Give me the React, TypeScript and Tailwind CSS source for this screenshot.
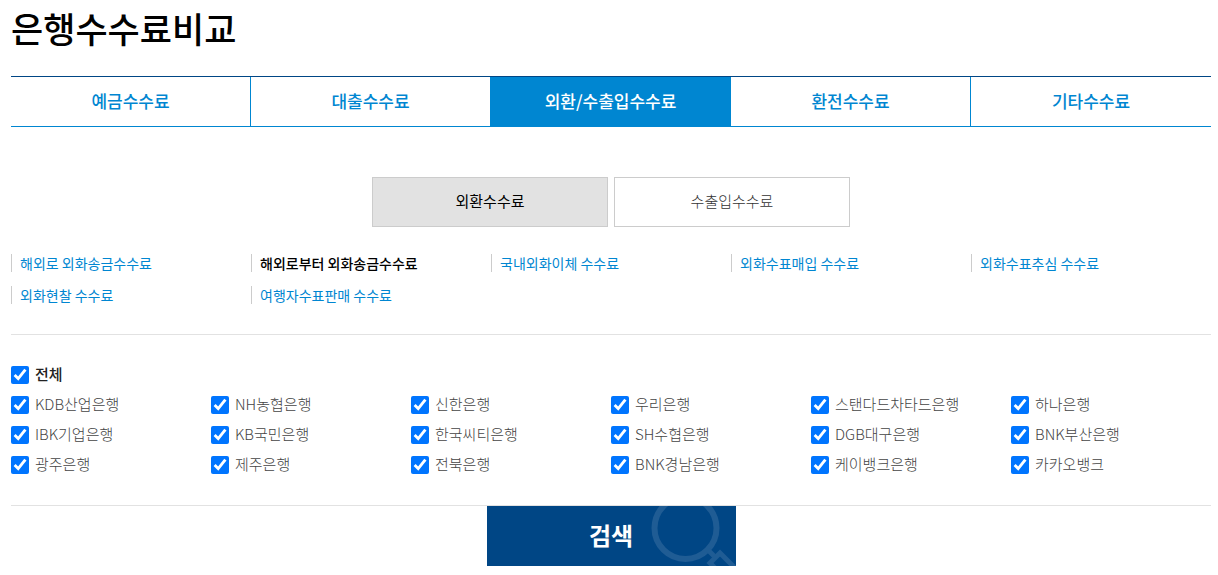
import React, { useState } from "react";
import clsx from "clsx";

const tabs = ["예금수수료", "대출수수료", "외환/수출입수수료", "환전수수료", "기타수수료"];

const subTabs = ["외환수수료", "수출입수수료"];

const feeTypes = [
    "해외로 외화송금수수료",
    "해외로부터 외화송금수수료",
    "국내외화이체 수수료",
    "외화수표매입 수수료",
    "외화수표추심 수수료",
    "외화현찰 수수료",
    "여행자수표판매 수수료",
];

const banks = [
    "KDB산업은행",
    "NH농협은행",
    "신한은행",
    "우리은행",
    "스탠다드차타드은행",
    "하나은행",
    "IBK기업은행",
    "KB국민은행",
    "한국씨티은행",
    "SH수협은행",
    "DGB대구은행",
    "BNK부산은행",
    "광주은행",
    "제주은행",
    "전북은행",
    "BNK경남은행",
    "케이뱅크은행",
    "카카오뱅크",
];

function FeeTabs() {
    return (
        <nav className="border-t border-b border-t-[#004685] border-b-[#0086d1]">
            <ul className="grid grid-cols-5 divide-x divide-[#0086d1]">
                {tabs.map((tab, i) => (
                    <li key={tab}>
                        <a
                            href="#"
                            className={clsx(
                                "flex h-[49px] items-center justify-center pb-0.5 text-[17px] font-medium",
                                i === 2 ? "bg-[#0086d1] text-white" : "text-[#0086d1]"
                            )}
                        >
                            {tab}
                        </a>
                    </li>
                ))}
            </ul>
        </nav>
    );
}

function BankCheckbox({ id, label, checked, bold, onChange }: {
    id: string;
    label: string;
    checked: boolean;
    bold?: boolean;
    onChange: () => void;
}) {
    return (
        <div className="flex h-[30px] items-center gap-[6px]">
            <input id={id} type="checkbox" checked={checked} onChange={onChange} className="size-[18px]" />
            <label
                htmlFor={id}
                className={clsx("pb-0.5 text-[15px] leading-[28px]", bold ? "font-medium text-[#222]" : "font-light text-[#444]")}
            >
                {label}
            </label>
        </div>
    );
}

function SearchButton() {
    return (
        <button type="submit" className="relative h-[60px] w-[249px] overflow-hidden bg-[#004685] pb-0.5 text-2xl font-bold text-white">
            <svg className="absolute inset-0" width="249" height="60" viewBox="0 0 249 60" fill="none" stroke="#1f5c94" aria-hidden="true">
                <circle cx="198.5" cy="22" r="31" strokeWidth="6" />
                <path d="M221 44l7 7" strokeWidth="5" />
                <path d="M238 72L223 57L233 47L256 70" strokeWidth="5" />
            </svg>
            <span className="relative">검색</span>
        </button>
    );
}

export default function App() {
    const [selected, setSelected] = useState<string[]>(banks);
    const allChecked = selected.length === banks.length;

    const toggle = (bank: string) =>
        setSelected((prev) => (prev.includes(bank) ? prev.filter((b) => b !== bank) : [...prev, bank]));

    return (
        <main className="bg-white pr-[7px] pl-[11px] font-['Noto_Sans_CJK_KR',sans-serif]">
            <h1 className="pt-1 pb-6 text-[35px] leading-[48px] font-medium text-black">은행수수료비교</h1>

            <FeeTabs />

            <div className="mt-[50px] flex justify-center gap-[6px]">
                {subTabs.map((tab, i) => (
                    <a
                        key={tab}
                        href="#"
                        className={clsx(
                            "flex h-[50px] w-[236px] items-center justify-center border border-[#ccc] pb-0.5 text-[15px]",
                            i === 0 ? "bg-[#e2e2e2] text-black" : "bg-white font-light text-[#333]"
                        )}
                    >
                        {tab}
                    </a>
                ))}
            </div>

            <ul className="mt-5 grid grid-cols-5 border-b border-[#e2e2e2] pb-[23px]">
                {feeTypes.map((type, i) => (
                    <li key={type} className="flex h-8 items-center">
                        <a
                            href="#"
                            className={clsx(
                                "border-l border-[#ccc] pl-2 text-sm leading-[18px]",
                                i === 1 ? "font-medium text-black" : "text-[#0086d1]"
                            )}
                        >
                            {type}
                        </a>
                    </li>
                ))}
            </ul>

            <form onSubmit={(e) => e.preventDefault()}>
                <div className="border-b border-[#e2e2e2] py-[25px]">
                    <BankCheckbox
                        id="bank-all"
                        label="전체"
                        bold
                        checked={allChecked}
                        onChange={() => setSelected(allChecked ? [] : banks)}
                    />
                    <div className="grid grid-cols-6">
                        {banks.map((bank, i) => (
                            <BankCheckbox
                                key={bank}
                                id={`bank-${i}`}
                                label={bank}
                                checked={selected.includes(bank)}
                                onChange={() => toggle(bank)}
                            />
                        ))}
                    </div>
                </div>
                <div className="flex justify-center">
                    <SearchButton />
                </div>
            </form>
        </main>
    );
}
